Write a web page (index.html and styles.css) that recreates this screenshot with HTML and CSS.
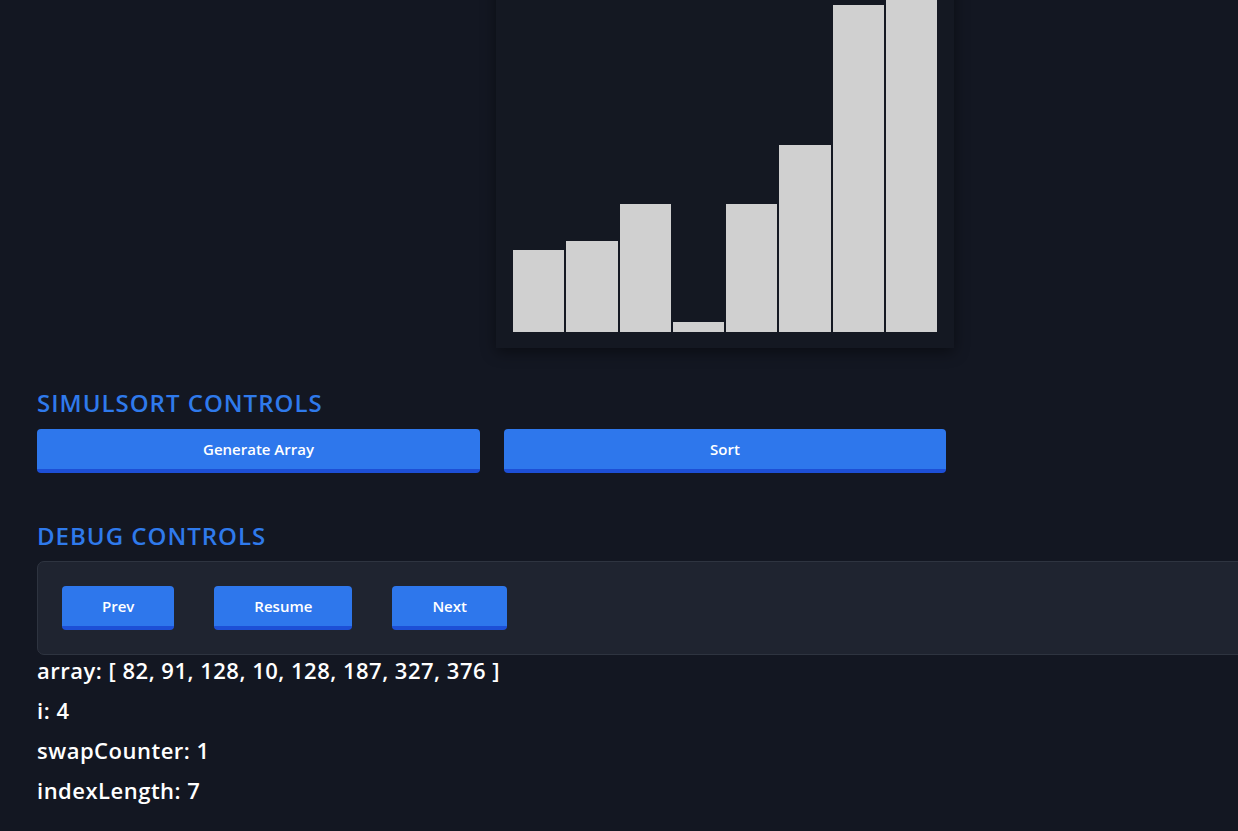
FILE: index.html
```html
<!DOCTYPE html>
<html lang="en">
<head>
<meta charset="utf-8">
<title>SimulSort</title>
<link rel="stylesheet" href="styles.css">
</head>
<body>
<div class="app">
  <div class="layout">
    <div class="chart-cell">
      <div class="chart">
        <div class="bar" style="height:82px"></div>
        <div class="bar" style="height:91px"></div>
        <div class="bar" style="height:128px"></div>
        <div class="bar" style="height:10px"></div>
        <div class="bar" style="height:128px"></div>
        <div class="bar" style="height:187px"></div>
        <div class="bar" style="height:327px"></div>
        <div class="bar" style="height:376px"></div>
      </div>
    </div>
  </div>

  <h2 class="section-title first">SIMULSORT CONTROLS</h2>
  <div class="layout">
    <button class="btn btn-wide">Generate Array</button>
    <button class="btn btn-wide">Sort</button>
  </div>

  <h2 class="section-title second">DEBUG CONTROLS</h2>
  <div class="debug-panel">
    <button class="btn btn-small">Prev</button>
    <button class="btn btn-small">Resume</button>
    <button class="btn btn-small">Next</button>
  </div>

  <div class="state">
    <p class="state-line">array: [ 82, 91, 128, 10, 128, 187, 327, 376 ]</p>
    <p class="state-line">i: 4</p>
    <p class="state-line">swapCounter: 1</p>
    <p class="state-line">indexLength: 7</p>
  </div>
</div>
</body>
</html>
```

FILE: styles.css
```css
html, body {
  margin: 0;
  padding: 0;
  background: #131722;
  overflow: hidden;
}

body {
  font-family: "Open Sans", "Noto Sans", sans-serif;
  color: #ffffff;
}

.app {
  padding-left: 37px;
}

.layout {
  display: grid;
  grid-template-columns: 443px 442px;
  column-gap: 24px;
}

.chart-cell {
  grid-column: 2;
  margin: -60px -8px 0 -8px;
}

.chart {
  background: #141822;
  box-shadow: 0 4px 14px rgba(0, 0, 0, 0.45);
  padding: 16px 17px 16px 17px;
  height: 376px;
  display: flex;
  align-items: flex-end;
  gap: 2px;
}

.bar {
  flex: 1;
  background: #d0d0d0;
}

.section-title {
  margin: 0;
  color: #2f7aeb;
  font-size: 24px;
  line-height: 30px;
  font-weight: 600;
  letter-spacing: 1px;
}

.section-title.first {
  margin-top: 40px;
  margin-bottom: 11px;
}

.section-title.second {
  margin-top: 48px;
  margin-bottom: 10px;
}

.btn {
  font-family: inherit;
  background: #2e77ec;
  color: #ffffff;
  border: 0;
  border-bottom: 4px solid #1d4fd6;
  border-radius: 4px;
  font-size: 15px;
  font-weight: 600;
  height: 44px;
  padding: 0;
  cursor: pointer;
}

.btn-wide {
  width: 100%;
}

.btn-small {
  padding: 0 40px;
}

.debug-panel {
  width: 1250px;
  box-sizing: border-box;
  background: #1f2430;
  border: 1px solid #2e3440;
  border-radius: 7px;
  padding: 24px 24px;
  display: flex;
  gap: 40px;
}

.state {
  display: flex;
  flex-direction: column;
}

.state-line {
  margin: 0 0 10px 0;
  font-size: 22px;
  line-height: 30px;
  font-weight: 600;
  letter-spacing: 0.5px;
}
```
